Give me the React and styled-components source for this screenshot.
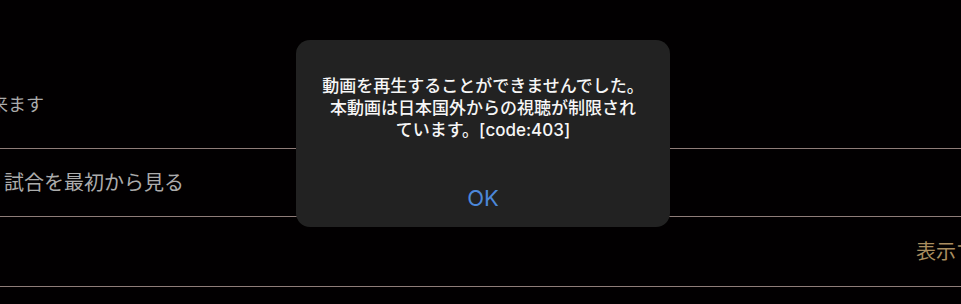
import React from "react";
import styled, { createGlobalStyle } from "styled-components";

const Global = createGlobalStyle`
  html, body { margin: 0; padding: 0; background: #000; }
  body { width: 961px; height: 304px; overflow: hidden; }
  * { box-sizing: border-box; }
`;

const Page = styled.div`
  position: relative;
  width: 961px;
  height: 304px;
  overflow: hidden;
  background: #020001;
  font-family: "Inter", "Noto Sans CJK JP", sans-serif;
`;

const Row = styled.div`
  display: flex;
  align-items: ${(p) => p.$align || "center"};
  height: ${(p) => p.$h}px;
  border-bottom: ${(p) => (p.$line ? "1px solid #8e7c78" : "none")};
  padding-left: ${(p) => p.$pl || 0}px;
  padding-top: ${(p) => p.$pt || 0}px;
  white-space: nowrap;
`;

const Label = styled.span`
  font-size: ${(p) => p.$size}px;
  color: ${(p) => p.$color || "#acacac"};
  margin-left: ${(p) => p.$ml || 0}px;
  margin-right: ${(p) => p.$mr || 0}px;
  line-height: 1.2;
  flex-shrink: 0;
`;

const Dialog = styled.div`
  position: absolute;
  left: 296px;
  top: 40px;
  width: 374px;
  height: 187px;
  background: #222222;
  border-radius: 14px;
  display: flex;
  flex-direction: column;
  align-items: center;
  padding-top: 35px;
`;

const Message = styled.div`
  color: #f6f6f6;
  font-size: 17px;
  font-weight: 500;
  line-height: 22px;
  text-align: center;
`;

const Line = styled.div`
  white-space: nowrap;
`;

const OkButton = styled.button`
  margin-top: 35px;
  height: 44px;
  width: 100%;
  background: none;
  border: none;
  color: #4c88da;
  font-family: "Inter", sans-serif;
  font-size: 22px;
  padding: 0;
`;

export default function App() {
  return (
    <>
      <Global />
      <Page>
        <Row $h={149} $line $align="flex-start" $pt={94}>
          <Label $size={18} $ml={-64}>視聴出来ます</Label>
        </Row>
        <Row $h={68} $line $pl={4}>
          <Label $size={20}>試合を最初から見る</Label>
        </Row>
        <Row $h={70} $line>
          <Label $size={20} $color="#a98d5f" $ml={916} $mr={-40}>表示する</Label>
        </Row>
        <Row $h={17} />
        <Dialog>
          <Message>
            <Line>動画を再生することができませんでした。</Line>
            <Line>本動画は日本国外からの視聴が制限され</Line>
            <Line>ています。[code:403]</Line>
          </Message>
          <OkButton>OK</OkButton>
        </Dialog>
      </Page>
    </>
  );
}
